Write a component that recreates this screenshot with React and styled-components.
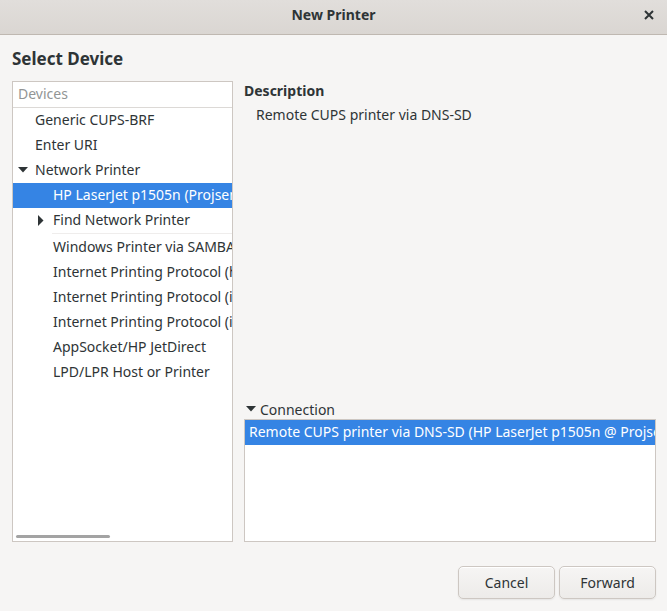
import React from "react";
import styled, { createGlobalStyle } from "styled-components";

const Global = createGlobalStyle`
  html, body { margin: 0; padding: 0; background: #f6f5f4; }
  body { font-family: "Noto Sans", "DejaVu Sans", sans-serif; font-size: 14px; color: #2e3436; }
  * { box-sizing: border-box; }
`;

const Window = styled.div`
  width: 667px;
  height: 611px;
  display: flex;
  flex-direction: column;
  background: #f6f5f4;
  overflow: hidden;
`;

const TitleBar = styled.div`
  height: 35px;
  flex: none;
  position: relative;
  display: flex;
  align-items: center;
  justify-content: center;
  background: linear-gradient(#e1dedb, #dad6d2);
  border-bottom: 1px solid #bfb8b1;
`;

const Title = styled.div`
  font-weight: 700;
  font-size: 14px;
  color: #2e3436;
  margin-top: -5px;
`;

const CloseButton = styled.div`
  position: absolute;
  right: 11px;
  top: 8px;
  width: 14px;
  height: 14px;
  display: flex;
  align-items: center;
  justify-content: center;
`;

const Content = styled.div`
  flex: 1;
  display: flex;
  flex-direction: column;
  padding: 0 11px 0 12px;
`;

const Heading = styled.div`
  height: 46px;
  display: flex;
  align-items: center;
  padding-top: 1px;
  font-weight: 700;
  font-size: 17px;
`;

const Main = styled.div`
  height: 461px;
  display: flex;
  gap: 11px;
  min-width: 0;
`;

const TreeBox = styled.div`
  width: 221px;
  flex: none;
  background: #fff;
  border: 1px solid #cdc7c2;
  position: relative;
  overflow: hidden;
  display: flex;
  flex-direction: column;
`;

const TreeHeader = styled.div`
  height: 26px;
  flex: none;
  display: flex;
  align-items: center;
  padding-left: 5px;
  padding-bottom: 3px;
  color: #929595;
  border-bottom: 1px solid #dcd9d6;
`;

const Row = styled.div`
  flex: none;
  position: relative;
  display: flex;
  align-items: center;
  white-space: nowrap;
  padding-left: ${(p) => p.$indent}px;
  padding-bottom: ${(p) => (p.$line ? 5 : 3)}px;
  background: ${(p) => (p.$selected ? "#3584e4" : "transparent")};
  color: ${(p) => (p.$selected ? "#ffffff" : "#2e3436")};
  height: ${(p) => (p.$line ? 27 : 25)}px;
  &::after {
    content: "";
    display: ${(p) => (p.$line ? "block" : "none")};
    position: absolute;
    left: ${(p) => p.$indent - 1}px;
    right: 0;
    bottom: 1px;
    height: 1px;
    background: #efedec;
  }
`;

const Arrow = styled.span`
  width: 18px;
  flex: none;
  display: flex;
  align-items: center;
  justify-content: flex-start;
  margin-left: -18px;
  padding-top: 2px;
`;

const ScrollBar = styled.div`
  position: absolute;
  left: 3px;
  bottom: 3px;
  width: 94px;
  height: 3px;
  border-radius: 2px;
  background: #a3a3a3;
`;

const RightCol = styled.div`
  flex: 1;
  min-width: 0;
  display: flex;
  flex-direction: column;
`;

const SectionLabel = styled.div`
  font-weight: 700;
  height: 18px;
  display: flex;
  align-items: center;
`;

const DescText = styled.div`
  padding-left: 12px;
  margin-top: 5px;
  height: 20px;
  display: flex;
  align-items: center;
`;

const Spacer = styled.div`
  flex: 1;
`;

const Expander = styled.div`
  height: 16px;
  display: flex;
  align-items: center;
  gap: 4px;
  padding-left: 2px;
  margin-bottom: 2px;
  margin-top: 2px;
`;

const ListBox = styled.div`
  height: 123px;
  flex: none;
  background: #fff;
  border: 1px solid #cdc7c2;
  overflow: hidden;
`;

const ListRow = styled.div`
  height: 25px;
  display: flex;
  align-items: center;
  padding-left: 4px;
  padding-bottom: 2px;
  white-space: nowrap;
  overflow: hidden;
  background: ${(p) => (p.$selected ? "#3584e4" : "transparent")};
  color: ${(p) => (p.$selected ? "#ffffff" : "#2e3436")};
`;

const Footer = styled.div`
  display: flex;
  justify-content: flex-end;
  gap: 4px;
  padding-top: 24px;
`;

const Button = styled.button`
  width: 97px;
  height: 33px;
  border: 1px solid #cdc7c2;
  border-radius: 5px;
  background: linear-gradient(#f6f5f4, #edebe9);
  box-shadow: inset 0 1px #ffffff, 0 1px 2px rgba(0,0,0,0.07);
  font-family: "Noto Sans", "DejaVu Sans", sans-serif;
  font-size: 14px;
  color: #2e3436;
  padding: 0;
`;

const DownTri = () => (
  <svg width="10" height="6" viewBox="0 0 10 6">
    <polygon points="0,0 10,0 5,5.5" fill="#2e3436" />
  </svg>
);
const RightTri = () => (
  <svg width="6" height="11" viewBox="0 0 6 11">
    <polygon points="0,0 5.5,5.5 0,11" fill="#2e3436" />
  </svg>
);

const devices = [
  { label: "Generic CUPS-BRF", indent: 22 },
  { label: "Enter URI", indent: 22 },
  { label: "Network Printer", indent: 22, arrow: "down" },
  { label: "HP LaserJet p1505n (Projsen)", indent: 40, selected: true },
  { label: "Find Network Printer", indent: 40, arrow: "right", line: true },
  { label: "Windows Printer via SAMBA", indent: 40 },
  { label: "Internet Printing Protocol (http)", indent: 40 },
  { label: "Internet Printing Protocol (ipp)", indent: 40 },
  { label: "Internet Printing Protocol (ipps)", indent: 40 },
  { label: "AppSocket/HP JetDirect", indent: 40 },
  { label: "LPD/LPR Host or Printer", indent: 40 },
];

export default function App() {
  return (
    <>
      <Global />
      <Window>
        <TitleBar>
          <Title>New Printer</Title>
          <CloseButton>
            <svg width="10" height="10" viewBox="0 0 10 10">
              <path d="M1 1 L9 9 M9 1 L1 9" stroke="#2e3436" strokeWidth="2" />
            </svg>
          </CloseButton>
        </TitleBar>
        <Content>
          <Heading>Select Device</Heading>
          <Main>
            <TreeBox>
              <TreeHeader>Devices</TreeHeader>
              {devices.map((d) => (
                <Row key={d.label} $indent={d.indent} $selected={d.selected} $line={d.line}>
                  {d.arrow && (
                    <Arrow style={{ paddingLeft: d.arrow === "down" ? 1 : 3 }}>
                      {d.arrow === "down" ? <DownTri /> : <RightTri />}
                    </Arrow>
                  )}
                  {d.label}
                </Row>
              ))}
              <ScrollBar />
            </TreeBox>
            <RightCol>
              <SectionLabel>Description</SectionLabel>
              <DescText>Remote CUPS printer via DNS-SD</DescText>
              <Spacer />
              <Expander>
                <DownTri />
                Connection
              </Expander>
              <ListBox>
                <ListRow $selected>Remote CUPS printer via DNS-SD (HP LaserJet p1505n @ Projsen)</ListRow>
              </ListBox>
            </RightCol>
          </Main>
          <Footer>
            <Button>Cancel</Button>
            <Button>Forward</Button>
          </Footer>
        </Content>
      </Window>
    </>
  );
}
